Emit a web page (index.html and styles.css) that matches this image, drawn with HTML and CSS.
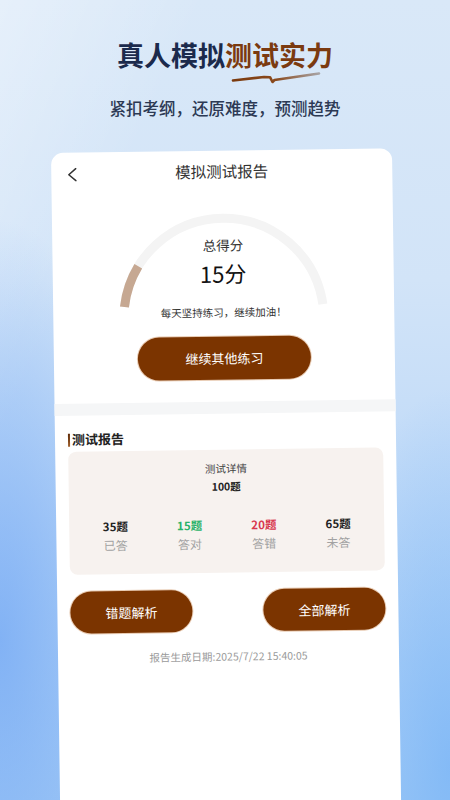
FILE: index.html
```html
<!DOCTYPE html>
<html lang="zh-CN">
<head>
<meta charset="utf-8">
<title>模拟测试报告</title>
<link rel="stylesheet" href="styles.css">
</head>
<body>
<div class="page">
  <header class="hero">
    <h1 class="hero-title"><span class="navy">真人模拟</span><span class="brown">测试实力<svg class="swoosh" viewBox="0 0 92 14" width="92" height="14"><defs><linearGradient id="sw" x1="0" y1="0" x2="1" y2="0"><stop offset="0" stop-color="#7a3a0e"/><stop offset="0.5" stop-color="#8a4a1e"/><stop offset="1" stop-color="#a8a4a6"/></linearGradient></defs><path d="M2 10.5 L33 7 L39 7.2 L41.5 12 L43.5 10 L88 3.5" fill="none" stroke="url(#sw)" stroke-width="2.6" stroke-linecap="round" stroke-linejoin="round"/></svg></span></h1>
    <p class="hero-sub">紧扣考纲，还原难度，预测趋势</p>
  </header>

  <section class="card">
    <div class="topbar">
      <svg class="back" viewBox="0 0 10 14" width="10" height="14"><polyline points="8.5,1 1.5,7 8.5,13" fill="none" stroke="#333" stroke-width="1.5" stroke-linecap="round" stroke-linejoin="round"/></svg>
      <span class="topbar-title">模拟测试报告</span>
      <span></span>
    </div>

    <div class="gauge">
      <svg class="gauge-arc" viewBox="0 0 341 141" width="341" height="141">
        <path d="M71.3 121 A100 100 0 0 1 269.7 121" fill="none" stroke="#f4f4f4" stroke-width="9"/>
        <path d="M71.3 121 A100 100 0 0 1 85.7 80.5" fill="none" stroke="#c6a892" stroke-width="9"/>
      </svg>
      <div class="gauge-label">总得分</div>
      <div class="gauge-score">15分</div>
      <div class="gauge-tip">每天坚持练习，继续加油！</div>
    </div>

    <button class="btn btn-wide">继续其他练习</button>

    <div class="divider"></div>

    <h2 class="section-title">测试报告</h2>

    <div class="detail">
      <div class="detail-head">测试详情</div>
      <div class="detail-total">100题</div>
      <div class="stats">
        <div class="stat"><span class="stat-num">35题</span><span class="stat-label">已答</span></div>
        <div class="stat"><span class="stat-num green">15题</span><span class="stat-label">答对</span></div>
        <div class="stat"><span class="stat-num red">20题</span><span class="stat-label">答错</span></div>
        <div class="stat"><span class="stat-num">65题</span><span class="stat-label">未答</span></div>
      </div>
    </div>

    <div class="actions">
      <button class="btn btn-half">错题解析</button>
      <button class="btn btn-half">全部解析</button>
    </div>

    <p class="stamp">报告生成日期:2025/7/22 15:40:05</p>
  </section>
</div>
</body>
</html>
```

FILE: styles.css
```css
* { box-sizing: border-box; }

html, body {
  margin: 0;
  padding: 0;
  height: 100%;
}

body {
  font-family: "Noto Sans CJK SC", "Noto Sans", sans-serif;
  overflow: hidden;
}

.page {
  width: 450px;
  height: 800px;
  overflow: hidden;
  background:
    radial-gradient(ellipse 150px 420px at 0% 80%, rgba(118, 170, 244, 0.8), rgba(118, 170, 244, 0) 100%),
    radial-gradient(ellipse 130px 380px at 100% 96%, rgba(120, 180, 246, 0.75), rgba(120, 180, 246, 0) 100%),
    linear-gradient(115deg, rgba(255,255,255,0.35) 0%, rgba(255,255,255,0) 25%),
    linear-gradient(180deg, #d9e8f8 0%, #d2e4f8 35%, #bcd8f8 65%, #a5ccf6 100%);
}

.hero {
  padding-top: 37px;
  text-align: center;
}

.hero-title {
  margin: 0;
  font-size: 27px;
  line-height: 36px;
  font-weight: 700;
  letter-spacing: 0;
}

.navy { color: #1b2a4c; }

.brown {
  color: #7b3a10;
  position: relative;
}

.swoosh {
  position: absolute;
  left: 6px;
  top: 35px;
}

.hero-sub {
  margin: 23px 0 0;
  font-size: 16.5px;
  line-height: 24px;
  font-weight: 500;
  color: #2c3954;
}

.card {
  margin: 33px 0 0 51px;
  width: 341px;
  min-height: 700px;
  background: #fff;
  border-radius: 12px 12px 0 0;
  transform: rotate(-0.8deg);
  transform-origin: 0 0;
}

.topbar {
  display: grid;
  grid-template-columns: 1fr auto 1fr;
  align-items: center;
  height: 34px;
  padding: 6px 16px 0;
}

.back {
  display: block;
  margin-top: 3px;
}

.topbar-title {
  font-size: 15.5px;
  line-height: 22px;
  color: #333;
}

.gauge {
  position: relative;
  padding-top: 50px;
  text-align: center;
}

.gauge-arc {
  position: absolute;
  left: 0;
  top: 0;
}

.gauge-label,
.gauge-score,
.gauge-tip {
  position: relative;
}

.gauge-label {
  font-size: 13.5px;
  line-height: 20px;
  color: #333;
}

.gauge-score {
  margin-top: 3px;
  font-size: 22px;
  line-height: 30px;
  color: #111;
}

.gauge-tip {
  margin-top: 17px;
  font-size: 10.5px;
  line-height: 16px;
  color: #333;
}

.btn {
  display: block;
  border: none;
  padding: 0;
  font-family: inherit;
  color: #fff;
  background: #7b3400;
  border-radius: 999px;
  box-shadow: 0 0 0 1px rgba(214, 160, 116, 0.55);
  font-size: 13px;
  cursor: pointer;
}

.btn-wide {
  margin: 16px auto 0;
  width: 173px;
  height: 43px;
}

.divider {
  margin-top: 22px;
  height: 12px;
  background: #f5f6f7;
}

.section-title {
  margin: 15px 0 0;
  padding-left: 13px;
  display: flex;
  align-items: center;
  font-size: 13px;
  line-height: 18px;
  font-weight: 700;
  color: #222;
}

.section-title::before {
  content: "";
  width: 2px;
  height: 13px;
  margin-right: 2px;
  background: linear-gradient(180deg, #5e2a08, #a0602c);
}

.detail {
  margin: 3px 13px 0;
  height: 123px;
  padding: 11px 9px 0;
  background: #f7f2ef;
  border-radius: 8px;
  text-align: center;
}

.detail-head {
  font-size: 10.5px;
  line-height: 16px;
  color: #444;
}

.detail-total {
  margin-top: 2px;
  font-size: 10.5px;
  line-height: 16px;
  font-weight: 700;
  color: #222;
}

.stats {
  display: grid;
  grid-template-columns: repeat(4, 1fr);
  margin-top: 21px;
}

.stat {
  display: flex;
  flex-direction: column;
  align-items: center;
}

.stat-num {
  font-size: 11.5px;
  line-height: 18px;
  font-weight: 700;
  color: #222;
}

.stat-num.green { color: #2ab36a; }
.stat-num.red { color: #d8384e; }

.stat-label {
  margin-top: 1px;
  font-size: 12px;
  line-height: 18px;
  color: #a2a2a2;
}

.actions {
  display: flex;
  justify-content: space-between;
  margin-top: 17px;
  padding: 0 13px;
}

.btn-half {
  width: 122px;
  height: 42px;
}

.stamp {
  margin: 17px 0 0;
  text-align: center;
  font-size: 10.5px;
  line-height: 16px;
  color: #9a9a9a;
}
```
